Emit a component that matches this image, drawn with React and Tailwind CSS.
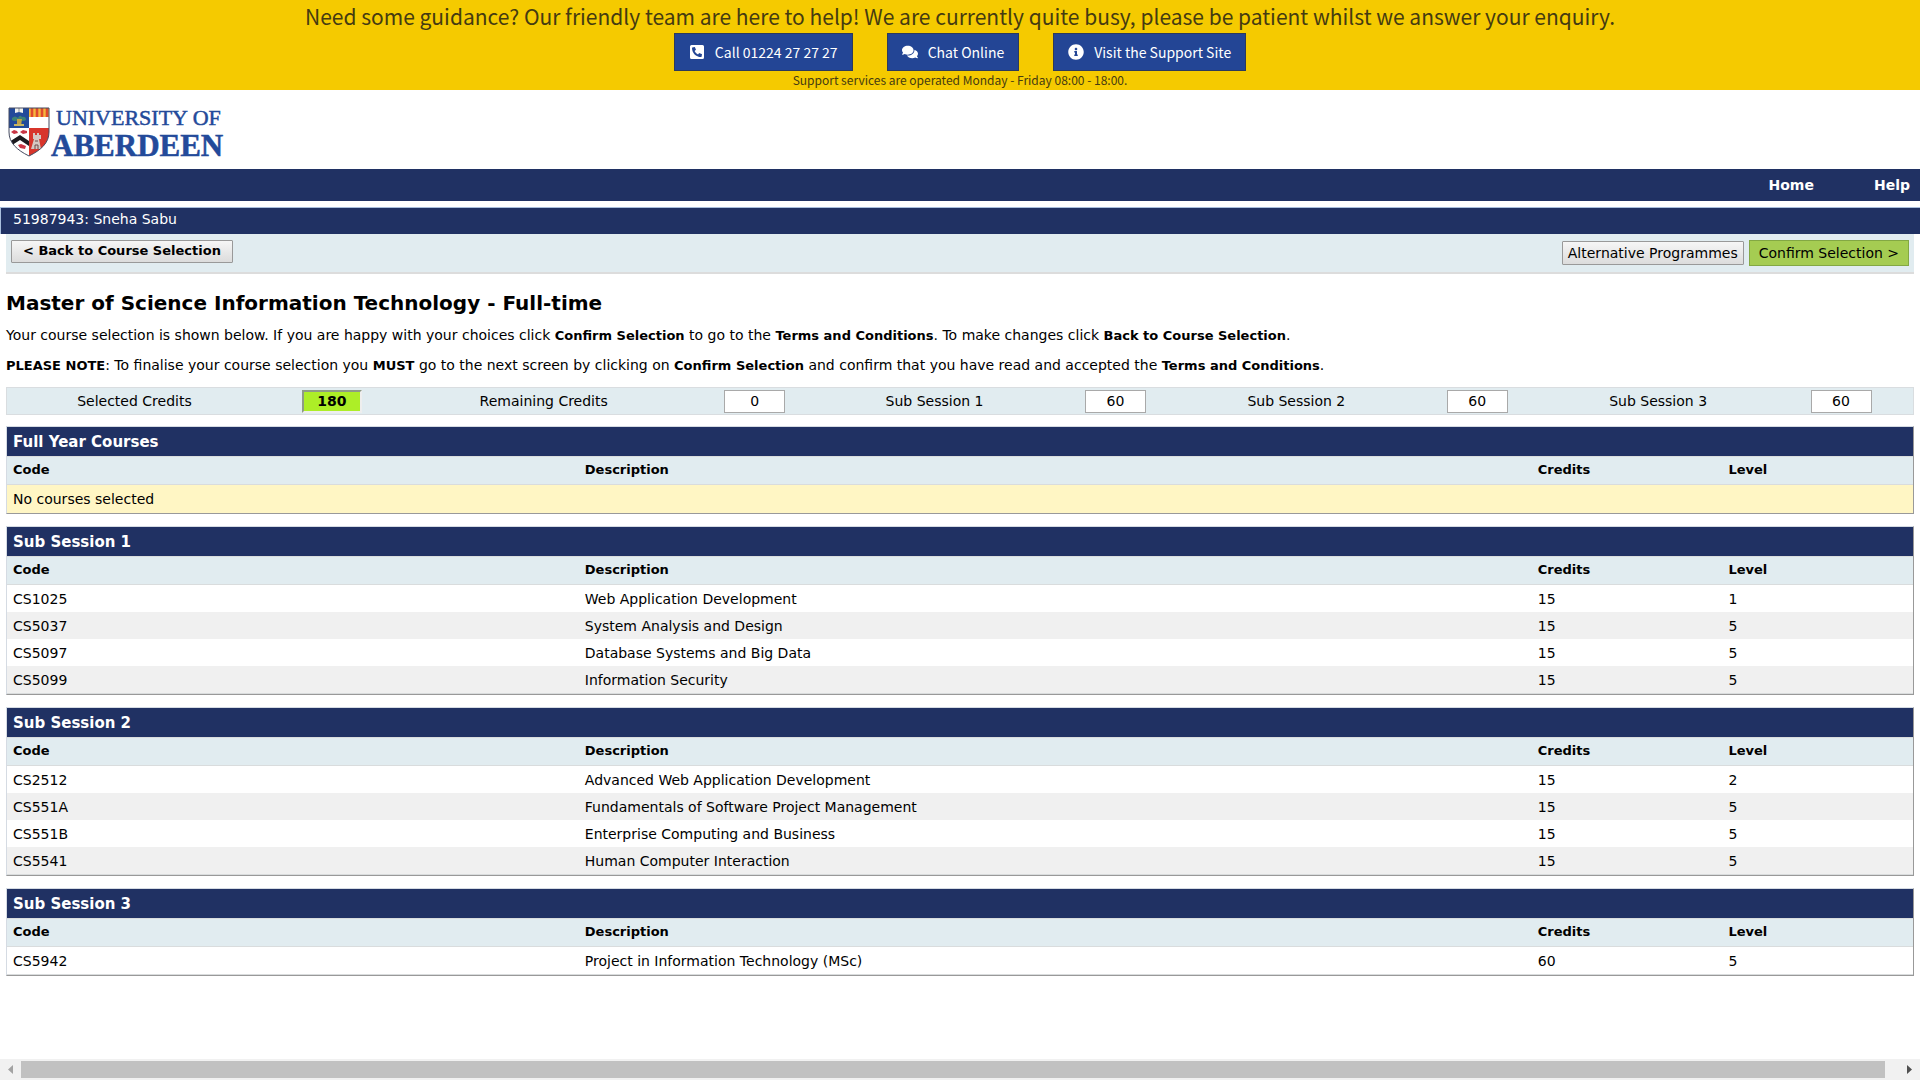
import React from "react";
import { FaPhoneSquareAlt, FaComments, FaInfoCircle } from "react-icons/fa";

const sessions = [
  { title: "Full Year Courses", courses: [] },
  {
    title: "Sub Session 1",
    courses: [
      ["CS1025", "Web Application Development", 15, 1],
      ["CS5037", "System Analysis and Design", 15, 5],
      ["CS5097", "Database Systems and Big Data", 15, 5],
      ["CS5099", "Information Security", 15, 5],
    ],
  },
  {
    title: "Sub Session 2",
    courses: [
      ["CS2512", "Advanced Web Application Development", 15, 2],
      ["CS551A", "Fundamentals of Software Project Management", 15, 5],
      ["CS551B", "Enterprise Computing and Business", 15, 5],
      ["CS5541", "Human Computer Interaction", 15, 5],
    ],
  },
  {
    title: "Sub Session 3",
    courses: [["CS5942", "Project in Information Technology (MSc)", 60, 5]],
  },
];

const credits = [
  { id: "selected", label: "Selected Credits", value: 180, highlight: true },
  { id: "remaining", label: "Remaining Credits", value: 0 },
  { id: "sub1", label: "Sub Session 1", value: 60 },
  { id: "sub2", label: "Sub Session 2", value: 60 },
  { id: "sub3", label: "Sub Session 3", value: 60 },
];

function SupportLink({ icon: Icon, children }) {
  return (
    <a
      href="#"
      className="flex h-[38px] items-center gap-2.5 border border-[#2c3a5c] bg-[#234595] px-3.5 text-sm text-white"
    >
      <Icon className="size-4" />
      {children}
    </a>
  );
}

function Banner() {
  return (
    <div className="flex h-[90px] flex-col items-center bg-[#f5ca00] font-['Noto_Sans_CJK_SC',sans-serif] text-[#453b11]">
      <p className="text-[21px] leading-[33px]">
        Need some guidance? Our friendly team are here to help! We are currently quite busy, please be patient whilst we
        answer your enquiry.
      </p>
      <div className="flex gap-[34px]">
        <SupportLink icon={FaPhoneSquareAlt}>Call 01224 27 27 27</SupportLink>
        <SupportLink icon={FaComments}>Chat Online</SupportLink>
        <SupportLink icon={FaInfoCircle}>Visit the Support Site</SupportLink>
      </div>
      <p className="text-xs leading-[18px]">Support services are operated Monday - Friday 08:00 - 18:00.</p>
    </div>
  );
}

function Logo() {
  return (
    <svg width="240" height="64" viewBox="0 0 240 64" role="img" aria-label="University of Aberdeen">
      <defs>
        <clipPath id="shield">
          <path d="M9 8H49V32C49 43 41 50 29 56C17 50 9 43 9 32Z" />
        </clipPath>
      </defs>
      <g clipPath="url(#shield)">
        <path d="M9 8H29V28H9Z" fill="#234a9a" />
        <path d="M29 8H49V28H29Z" fill="#fff" />
        <path d="M9 28H29V56H9Z" fill="#fff" />
        <path d="M29 28H49V56H29Z" fill="#d8352b" />
        <path d="M29 8H49V17H29Z" fill="#f6b63c" />
        <path d="M32 8V17M37 8V17M42 8V17M47 8V17" stroke="#df4a2d" strokeWidth="2.6" />
        <path d="M15 8H23V13L19 12L15 13Z" fill="#f3f3ee" />
        <path d="M19 8V12" stroke="#8b8f99" />
        <path d="M12 18Q15 15 18 18Q20 14 22 17Q26 16 26 20Q23 22 20 20Q14 22 12 20Z" fill="#3d8175" />
        <path d="M17 19H22L21 26H17Z" fill="#c0a14a" />
        <path d="M14 25H24" stroke="#c8b462" strokeWidth="2" />
        <path d="M9 42L20 35L29 41V46L20 40L9 47Z" fill="#1d1b20" />
        <path
          d="M11 32L14 30L17 31L18 33L14 34ZM20 32L23 30L27 31L27 33L23 34ZM18 45L21 44L26 46L25 49L20 48Z"
          fill="#c93545"
        />
        <path d="M33 33H35V35H37V33H39V35H41V39H39L41 49H31L34 39H33Z" fill="#d5c8c2" />
        <path d="M35 41H38M35 49V45H38V49" stroke="#6f4b4b" fill="none" />
      </g>
      <path d="M9 8H49V32C49 43 41 50 29 56C17 50 9 43 9 32Z" fill="none" stroke="#454b60" />
      <g fill="#234a9a" stroke="#234a9a" strokeWidth="0.5" fontFamily="'Liberation Serif', serif">
        <text x="56" y="25" fontSize="22">
          UNIVERSITY OF
        </text>
        <text x="51" y="56" fontSize="31" fontWeight="700">
          ABERDEEN
        </text>
      </g>
    </svg>
  );
}

function CreditSummary() {
  return (
    <div className="mt-3 grid h-7 grid-cols-[255fr_140fr_284fr_138fr_222fr_140fr_222fr_140fr_222fr_144fr] items-center border border-[#d9dde0] bg-[#e1ecf0]">
      {credits.map((c) => (
        <React.Fragment key={c.id}>
          <label htmlFor={c.id} className="text-center">
            {c.label}
          </label>
          <input
            id={c.id}
            readOnly
            value={c.value}
            className={
              c.highlight
                ? "h-[23px] w-[60px] justify-self-center border-2 border-t-[#8f9b86] border-l-[#8f9b86] border-r-[#eeeeee] border-b-[#eeeeee] bg-[#adee27] text-center font-bold"
                : "h-[23px] w-[61px] justify-self-center border border-[#a9a9a9] bg-white text-center"
            }
          />
        </React.Fragment>
      ))}
    </div>
  );
}

function SessionTable({ title, courses }) {
  return (
    <section className="mb-3 border border-t-[#d5dbe3] border-r-[#999999] border-b-[#999999] border-l-[#d5dbe3]">
      <h2 className="h-[29px] bg-[#203163] px-1.5 text-[15px] leading-[30px] font-bold text-white">{title}</h2>
      <table className="w-full table-fixed border-separate border-spacing-0 text-left">
        <thead>
          <tr className="h-[29px] bg-[#e1ecf0] text-[13px] *:border-y *:border-[#d9dcdd] *:px-1.5">
            <th className="w-[30%]">Code</th>
            <th className="w-1/2">Description</th>
            <th className="w-[10%]">Credits</th>
            <th className="w-[10%]">Level</th>
          </tr>
        </thead>
        <tbody>
          {courses.length === 0 && (
            <tr className="h-7 bg-[#fff6c4]">
              <td colSpan={4} className="px-1.5">
                No courses selected
              </td>
            </tr>
          )}
          {courses.map((row) => (
            <tr
              key={row[0]}
              className="h-[27px] *:px-1.5 last:h-7 last:*:border-b last:*:border-[#d9dcdd] even:bg-[#f0f0f0]"
            >
              {row.map((cell, i) => (
                <td key={i}>{cell}</td>
              ))}
            </tr>
          ))}
        </tbody>
      </table>
    </section>
  );
}

export default function App() {
  return (
    <div className="flex min-h-screen flex-col bg-white font-['DejaVu_Sans',sans-serif] text-sm text-black">
      <Banner />
      <header>
        <div className="flex h-[79px] items-start pt-2.5">
          <Logo />
        </div>
        <nav className="flex h-8 items-center justify-end gap-[60px] bg-[#203163] pr-2.5 font-bold text-white">
          <a href="#">Home</a>
          <a href="#">Help</a>
        </nav>
        <div className="mt-1.5 h-[27px] border-t border-l border-[#a9bfdd] bg-[#203163] px-3 leading-[22px] text-white">
          51987943: Sneha Sabu
        </div>
      </header>
      <main className="mx-1.5">
        <div className="flex h-10 items-start border-b-2 border-[#dcdcdc] bg-[#e1ecf0] px-[5px] pt-1.5">
          <button className="h-[23px] rounded-[1px] border border-[#999999] bg-linear-to-b from-[#f6f6f6] to-[#dcdcdc] px-[11px] text-[13px] font-bold">
            &lt; Back to Course Selection
          </button>
          <button className="mt-px ml-auto h-6 rounded-[1px] border border-[#999999] bg-linear-to-b from-[#f6f6f6] to-[#dcdcdc] px-[5px]">
            Alternative Programmes
          </button>
          <button className="ml-[5px] h-[26px] border border-[#83a843] bg-[#a5cc52] px-[9px]">
            Confirm Selection &gt;
          </button>
        </div>
        <h1 className="mt-[15px] text-xl leading-7 font-bold">Master of Science Information Technology - Full-time</h1>
        <p className="mt-2 leading-5 [&>b]:text-[13px] [&>b]:leading-none">
          Your course selection is shown below. If you are happy with your choices click <b>Confirm Selection</b> to go
          to the <b>Terms and Conditions</b>. To make changes click <b>Back to Course Selection</b>.
        </p>
        <p className="mt-2.5 leading-5 [&>b]:text-[13px] [&>b]:leading-none">
          <b>PLEASE NOTE</b>: To finalise your course selection you <b>MUST</b> go to the next screen by clicking on{" "}
          <b>Confirm Selection</b> and confirm that you have read and accepted the <b>Terms and Conditions</b>.
        </p>
        <CreditSummary />
        <div className="mt-[11px]">
          {sessions.map((s) => (
            <SessionTable key={s.title} {...s} />
          ))}
        </div>
      </main>
      <div className="mt-auto flex h-[21px] items-center justify-between bg-[#f1f1f1]" aria-hidden="true">
        <svg width="21" height="21">
          <path d="M13 6V15L8 10.5Z" fill="#a3a3a3" />
        </svg>
        <div className="h-[17px] grow bg-[#c1c1c1]" />
        <svg width="35" height="21">
          <path d="M22 6V15L27 10.5Z" fill="#505050" />
        </svg>
      </div>
    </div>
  );
}
